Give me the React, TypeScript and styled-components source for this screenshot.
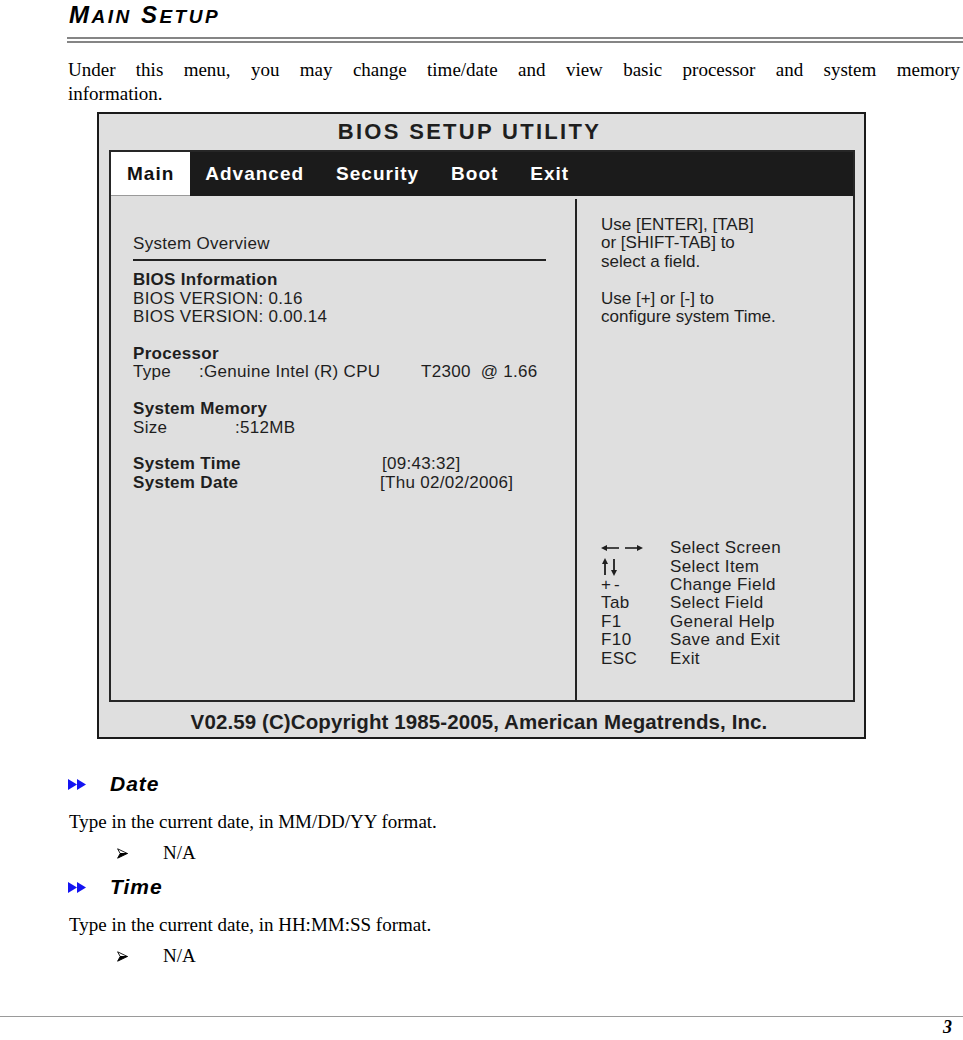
import React from "react";
import styled, { createGlobalStyle } from "styled-components";

const GlobalStyle = createGlobalStyle`
  html, body {
    margin: 0;
    padding: 0;
    background: #ffffff;
  }
`;

const SANS = `"Liberation Sans", Arial, sans-serif`;
const SERIF = `"Liberation Serif", "Times New Roman", serif`;
const BIOS_INK = "#1e1e1e";

const Page = styled.div`
  width: 963px;
  height: 1040px;
  display: flex;
  flex-direction: column;
  font-family: ${SERIF};
  color: #000;
  overflow: hidden;
`;

const Content = styled.main`
  display: flex;
  flex-direction: column;
  padding: 2px 3px 0 68px;
`;

const Title = styled.h1`
  height: 26px;
  margin: 0 0 0 1px;
  font: italic 700 24px/26px ${SANS};
  letter-spacing: 2.5px;
`;

const SmallCap = styled.span`
  font-size: 19px;
`;

const DoubleRule = styled.hr`
  margin: 9px -3px 0 -1px;
  height: 0;
  border: 0;
  border-top: 6px double #858585;
`;

const Intro = styled.div`
  margin-top: 15px;
  font-size: 19px;
  line-height: 24px;
`;

const JustifiedLine = styled.div`
  text-align: justify;
  text-align-last: justify;
`;

/* ---------- BIOS screenshot ---------- */

const BiosShot = styled.div`
  box-sizing: border-box;
  width: 769px;
  height: 627px;
  margin: 6px 0 0 29px;
  display: flex;
  flex-direction: column;
  background: #dfdfdf;
  border: 2px solid #1a1a1a;
  color: ${BIOS_INK};
  font-family: ${SANS};
`;

const BiosTitle = styled.div`
  height: 36px;
  display: flex;
  align-items: center;
  justify-content: center;
  padding-right: 24px;
  font-size: 22px;
  font-weight: 700;
  letter-spacing: 2.3px;
`;

const BiosFrame = styled.div`
  flex: 1;
  display: flex;
  flex-direction: column;
  margin: 0 9px 0 10px;
  border: 2px solid #262626;
`;

const MenuBar = styled.nav`
  height: 44px;
  display: flex;
  background: #1b1b1b;
`;

const MenuTab = styled.div<{ $active?: boolean }>`
  display: flex;
  align-items: center;
  padding: 0 ${(p) => (p.$active ? "16px" : "15px")};
  margin-right: ${(p) => (p.$active ? "0" : "2px")};
  background: ${(p) => (p.$active ? "#ffffff" : "transparent")};
  color: ${(p) => (p.$active ? "#111" : "#fff")};
  border-bottom: ${(p) => (p.$active ? "1px solid #9a9a9a" : "0")};
  font-size: 19px;
  font-weight: 700;
  letter-spacing: 1px;
`;

const BiosBody = styled.div`
  flex: 1;
  display: grid;
  grid-template-columns: 466px 1fr;
  font-size: 17px;
  line-height: 18.4px;
`;

const LeftPane = styled.section`
  margin-top: 3px;
  padding: 36px 0 0 22px;
  border-right: 2px solid #222;
  letter-spacing: 0.3px;
`;

const OverviewRule = styled.div`
  width: 413px;
  margin: 6px 0 10px;
  border-top: 2px solid #222;
`;

const InfoGroup = styled.div`
  margin-bottom: 18.4px;
`;

const Strong = styled.span<{ $w?: number }>`
  display: block;
  flex: none;
  width: ${(p) => (p.$w ? `${p.$w}px` : "auto")};
  font-weight: 700;
`;

const InfoRow = styled.div`
  display: flex;
  white-space: pre;
`;

const Cell = styled.span<{ $w?: number }>`
  flex: none;
  width: ${(p) => (p.$w ? `${p.$w}px` : "auto")};
`;

const RightPane = styled.section`
  display: flex;
  flex-direction: column;
  padding: 20px 0 32px 24px;
`;

const HelpBlock = styled.p`
  margin: 0 0 18.4px;
`;

const Legend = styled.div`
  margin-top: auto;
  display: grid;
  grid-template-columns: 69px 1fr;
  grid-auto-rows: 18.4px;
  letter-spacing: 0.4px;
`;

const KeyCell = styled.div`
  display: flex;
  align-items: center;
`;

const PlusMinus = styled.span`
  letter-spacing: 3px;
`;

const BiosFooter = styled.div`
  height: 35px;
  display: flex;
  align-items: center;
  justify-content: center;
  padding: 4px 5px 0 0;
  box-sizing: border-box;
  font-size: 20.5px;
  font-weight: 700;
  letter-spacing: 0.1px;
`;

/* ---------- option descriptions ---------- */

const Section = styled.section`
  margin-top: 10px;
  &:first-of-type {
    margin-top: 33px;
  }
`;

const SectionHeading = styled.h2`
  margin: 0;
  display: flex;
  align-items: center;
  font: italic 700 21px/24px ${SANS};
  letter-spacing: 1px;
`;

const Bullet = styled.span`
  width: 42px;
  display: flex;
  align-items: center;
`;

const BodyText = styled.p`
  margin: 14px 0 0 1px;
  font-size: 19px;
  line-height: 24px;
`;

const Option = styled.div`
  margin: 7px 0 0 49px;
  display: flex;
  align-items: center;
  font-size: 19px;
  line-height: 24px;
`;

const OptionMark = styled.span`
  width: 46px;
  display: flex;
  align-items: center;
`;

const PageFooter = styled.footer`
  margin-top: auto;
  height: 23px;
  border-top: 1px solid #9a9a9a;
  padding-right: 11px;
  text-align: right;
  font: italic 700 18px/20px ${SERIF};
`;

/* ---------- drawings ---------- */

const DoubleTriangle = () => (
  <svg width="18" height="11" viewBox="0 0 18 11">
    <polygon points="0,0 9,5.5 0,11" fill="#1414f2" />
    <polygon points="9,0 18,5.5 9,11" fill="#1414f2" />
  </svg>
);

const ArrowHead = () => (
  <svg width="11" height="11" viewBox="0 0 11 11">
    <path d="M0.6,0.8 L10.4,5.5 L3.2,5.5 Z" fill="#fff" stroke="#000" strokeWidth="0.9" strokeLinejoin="round" />
    <path d="M3.2,5.5 L10.4,5.5 L0.6,10.2 Z" fill="#000" stroke="#000" strokeWidth="0.9" strokeLinejoin="round" />
  </svg>
);

const LeftRight = () => (
  <svg width="42" height="10" viewBox="0 0 42 10">
    <line x1="4" y1="5" x2="18" y2="5" stroke={BIOS_INK} strokeWidth="1.6" />
    <polygon points="0,5 6,2 6,8" fill={BIOS_INK} />
    <line x1="24" y1="5" x2="38" y2="5" stroke={BIOS_INK} strokeWidth="1.6" />
    <polygon points="42,5 36,2 36,8" fill={BIOS_INK} />
  </svg>
);

const UpDown = () => (
  <svg width="18" height="18" viewBox="0 0 18 18">
    <line x1="4" y1="4" x2="4" y2="17" stroke={BIOS_INK} strokeWidth="1.8" />
    <polygon points="4,0 1,6 7,6" fill={BIOS_INK} />
    <line x1="13" y1="1" x2="13" y2="14" stroke={BIOS_INK} strokeWidth="1.8" />
    <polygon points="13,18 10,12 16,12" fill={BIOS_INK} />
  </svg>
);

const legend: { key: React.ReactNode; label: string }[] = [
  { key: <LeftRight />, label: "Select Screen" },
  { key: <UpDown />, label: "Select Item" },
  { key: <PlusMinus>+-</PlusMinus>, label: "Change Field" },
  { key: "Tab", label: "Select Field" },
  { key: "F1", label: "General Help" },
  { key: "F10", label: "Save and Exit" },
  { key: "ESC", label: "Exit" },
];

const tabs = ["Main", "Advanced", "Security", "Boot", "Exit"];

const BiosScreen = () => (
  <BiosShot>
    <BiosTitle>BIOS SETUP UTILITY</BiosTitle>
    <BiosFrame>
      <MenuBar>
        {tabs.map((t, i) => (
          <MenuTab key={t} $active={i === 0}>
            {t}
          </MenuTab>
        ))}
      </MenuBar>
      <BiosBody>
        <LeftPane>
          <div>System Overview</div>
          <OverviewRule />
          <InfoGroup>
            <Strong>BIOS Information</Strong>
            <div>BIOS VERSION: 0.16</div>
            <div>BIOS VERSION: 0.00.14</div>
          </InfoGroup>
          <InfoGroup>
            <Strong>Processor</Strong>
            <InfoRow>
              <Cell $w={66}>Type</Cell>
              <Cell $w={222}>:Genuine Intel (R) CPU</Cell>
              <Cell>T2300  @ 1.66</Cell>
            </InfoRow>
          </InfoGroup>
          <InfoGroup>
            <Strong>System Memory</Strong>
            <InfoRow>
              <Cell $w={102}>Size</Cell>
              <Cell>:512MB</Cell>
            </InfoRow>
          </InfoGroup>
          <InfoRow>
            <Strong $w={249}>System Time</Strong>
            <Cell>[09:43:32]</Cell>
          </InfoRow>
          <InfoRow>
            <Strong $w={247}>System Date</Strong>
            <Cell>[Thu 02/02/2006]</Cell>
          </InfoRow>
        </LeftPane>
        <RightPane>
          <HelpBlock>
            Use [ENTER], [TAB]
            <br />
            or [SHIFT-TAB] to
            <br />
            select a field.
          </HelpBlock>
          <HelpBlock>
            Use [+] or [-] to
            <br />
            configure system Time.
          </HelpBlock>
          <Legend>
            {legend.map((row) => (
              <React.Fragment key={row.label}>
                <KeyCell>{row.key}</KeyCell>
                <KeyCell>{row.label}</KeyCell>
              </React.Fragment>
            ))}
          </Legend>
        </RightPane>
      </BiosBody>
    </BiosFrame>
    <BiosFooter>V02.59 (C)Copyright 1985-2005, American Megatrends, Inc.</BiosFooter>
  </BiosShot>
);

const options = [
  { title: "Date", text: "Type in the current date, in MM/DD/YY format." },
  { title: "Time", text: "Type in the current date, in HH:MM:SS format." },
];

export default function App() {
  return (
    <Page>
      <GlobalStyle />
      <Content>
        <Title>
          M<SmallCap>AIN</SmallCap> S<SmallCap>ETUP</SmallCap>
        </Title>
        <DoubleRule />
        <Intro>
          <JustifiedLine>
            Under this menu, you may change time/date and view basic processor and system memory
          </JustifiedLine>
          <div>information.</div>
        </Intro>
        <BiosScreen />
        {options.map((o) => (
          <Section key={o.title}>
            <SectionHeading>
              <Bullet>
                <DoubleTriangle />
              </Bullet>
              {o.title}
            </SectionHeading>
            <BodyText>{o.text}</BodyText>
            <Option>
              <OptionMark>
                <ArrowHead />
              </OptionMark>
              N/A
            </Option>
          </Section>
        ))}
      </Content>
      <PageFooter>3</PageFooter>
    </Page>
  );
}
